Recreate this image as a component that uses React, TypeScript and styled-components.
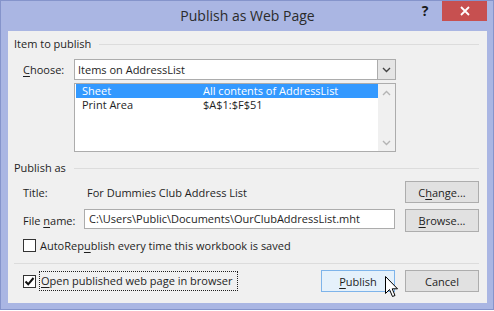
import styled, { createGlobalStyle } from 'styled-components';

const GlobalStyle = createGlobalStyle`
  html, body { margin: 0; padding: 0; background: #ffffff; }
  body { font-family: 'Segoe UI', 'Open Sans', 'Noto Sans', sans-serif; }
`;

const FONT = "'Segoe UI', 'Open Sans', 'Noto Sans', sans-serif";

const Window = styled.div`
  position: relative;
  box-sizing: border-box;
  width: 494px;
  height: 310px;
  background: #aab6e3;
  border: 1px solid #8594cb;
  padding: 0 6px 6px 7px;
  display: flex;
  flex-direction: column;
  font-family: ${FONT};
  font-size: 11px;
  color: #1e1e1e;
`;

const TitleBar = styled.div`
  height: 30px;
  display: grid;
  grid-template-columns: 1fr auto 1fr;
  align-items: start;
`;

const Title = styled.div`
  grid-column: 2;
  font-size: 14px;
  line-height: 30px;
  color: #2b2b2b;
`;

const Controls = styled.div`
  grid-column: 3;
  justify-self: end;
  display: flex;
  align-items: flex-start;
`;

const HelpButton = styled.div`
  width: 30px;
  height: 20px;
  font-size: 14px;
  font-weight: 700;
  line-height: 20px;
  text-align: center;
  color: #1a1a1a;
  margin-right: 2px;
`;

const CloseButton = styled.div`
  width: 45px;
  height: 20px;
  background: #c75050;
  display: flex;
  align-items: center;
  justify-content: center;
`;

const Client = styled.div`
  flex: 1;
  background: #f0f0f0;
  padding: 0 8px 0 6px;
  display: flex;
  flex-direction: column;
`;

const GroupHeader = styled.div<{ $top: number }>`
  margin-top: ${p => p.$top}px;
  height: 14px;
  display: flex;
  align-items: center;
  gap: 8px;
  line-height: 14px;
  &::after {
    content: '';
    flex: 1;
    height: 1px;
    background: #dcdcdc;
  }
`;

const Row = styled.div<{ $top: number; $h: number }>`
  margin-top: ${p => p.$top}px;
  height: ${p => p.$h}px;
  padding-left: 9px;
  display: flex;
  align-items: center;
`;

const Label = styled.div<{ $w: number }>`
  width: ${p => p.$w}px;
  flex-shrink: 0;
`;

const Combo = styled.div`
  box-sizing: border-box;
  width: 322px;
  height: 21px;
  border: 1px solid #acacac;
  background: #ffffff;
  display: flex;
  align-items: stretch;
`;

const ComboText = styled.div`
  flex: 1;
  padding-left: 3px;
  line-height: 20px;
`;

const ComboArrow = styled.div`
  width: 17px;
  background: #e5e5e5;
  border-left: 1px solid #acacac;
  display: flex;
  align-items: center;
  justify-content: center;
`;

const ListBox = styled.div`
  box-sizing: border-box;
  margin: 3px 0 0 60px;
  width: 322px;
  height: 69px;
  border: 1px solid #acacac;
  background: #ffffff;
  display: flex;
`;

const ListItems = styled.div`
  flex: 1;
  padding: 0 0 0 1px;
`;

const ListItem = styled.div<{ $selected?: boolean }>`
  height: 14px;
  line-height: 14px;
  display: flex;
  padding-left: 6px;
  background: ${p => (p.$selected ? '#3399ff' : 'transparent')};
  color: ${p => (p.$selected ? '#ffffff' : '#1e1e1e')};
`;

const ListCol = styled.div`
  width: 121px;
`;

const ScrollBar = styled.div`
  width: 17px;
  background: #f0f0f0;
  display: flex;
  flex-direction: column;
  justify-content: space-between;
  align-items: center;
  padding: 6px 0 5px;
  box-sizing: border-box;
`;

const Value = styled.div`
  flex: 1;
`;

const TextInput = styled.div`
  box-sizing: border-box;
  width: 311px;
  height: 20px;
  border: 1px solid #acacac;
  background: #ffffff;
  padding-left: 4px;
  line-height: 18px;
  align-self: flex-start;
`;

const Button = styled.div<{ $default?: boolean; $h?: number; $gap?: number }>`
  box-sizing: border-box;
  width: 74px;
  height: ${p => p.$h ?? 22}px;
  margin-left: ${p => (p.$gap !== undefined ? `${p.$gap}px` : 'auto')};
  border: 1px solid ${p => (p.$default ? '#7eb4ea' : '#adadad')};
  background: ${p => (p.$default ? '#e5f1fb' : '#e1e1e1')};
  display: flex;
  align-items: center;
  justify-content: center;
  flex-shrink: 0;
  align-self: flex-start;
`;

const Check = styled.div`
  box-sizing: border-box;
  width: 13px;
  height: 13px;
  border: 1px solid #333333;
  background: #ffffff;
  margin-right: 4px;
  flex-shrink: 0;
  display: flex;
  align-items: center;
  justify-content: center;
`;

const Focus = styled.div`
  outline: 1px dotted #1e1e1e;
  outline-offset: 0;
  padding: 1px 0 2px 1px;
  width: 196px;
  margin-right: auto;
`;

const Separator = styled.div`
  margin-top: 11px;
  height: 1px;
  background: #dcdcdc;
`;

const Key = styled.u`
  text-underline-offset: 2px;
`;

const Cursor = styled.svg`
  position: absolute;
  left: 384px;
  top: 275px;
`;

const Chevron = ({ color, up }: { color: string; up?: boolean }) => (
  <svg width="9" height="6" viewBox="0 0 9 6">
    <path
      d={up ? 'M1 5 L4.5 1.5 L8 5' : 'M1 1 L4.5 4.5 L8 1'}
      fill="none"
      stroke={color}
      strokeWidth="1.4"
    />
  </svg>
);

export default function App() {
  return (
    <>
      <GlobalStyle />
      <Window>
        <TitleBar>
          <Title>Publish as Web Page</Title>
          <Controls>
            <HelpButton>?</HelpButton>
            <CloseButton>
              <svg width="10" height="10" viewBox="0 0 10 10">
                <path d="M1 1 L9 9 M9 1 L1 9" stroke="#ffffff" strokeWidth="1.8" />
              </svg>
            </CloseButton>
          </Controls>
        </TitleBar>
        <Client>
          <GroupHeader $top={6}>Item to publish</GroupHeader>
          <Row $top={8} $h={21}>
            <Label $w={51}>
              <Key>C</Key>hoose:
            </Label>
            <Combo>
              <ComboText>Items on AddressList</ComboText>
              <ComboArrow>
                <Chevron color="#444" />
              </ComboArrow>
            </Combo>
          </Row>
          <ListBox>
            <ListItems>
              <ListItem $selected>
                <ListCol>Sheet</ListCol>
                <div>All contents of AddressList</div>
              </ListItem>
              <ListItem>
                <ListCol>Print Area</ListCol>
                <div>$A$1:$F$51</div>
              </ListItem>
            </ListItems>
            <ScrollBar>
              <Chevron color="#b4b4b4" up />
              <Chevron color="#b4b4b4" />
            </ScrollBar>
          </ListBox>
          <GroupHeader $top={9}>Publish as</GroupHeader>
          <Row $top={6} $h={22}>
            <Label $w={64}>Title:</Label>
            <Value>For Dummies Club Address List</Value>
            <Button>
              C<Key>h</Key>ange...
            </Button>
          </Row>
          <Row $top={6} $h={23}>
            <Label $w={61}>
              File <Key>n</Key>ame:
            </Label>
            <TextInput>C:\Users\Public\Documents\OurClubAddressList.mht</TextInput>
            <Button $h={23}>
              <Key>B</Key>rowse...
            </Button>
          </Row>
          <Row $top={6} $h={14}>
            <Check />
            AutoRep<Key>u</Key>blish every time this workbook is saved
          </Row>
          <Separator />
          <Row $top={6} $h={22}>
            <Check>
              <svg width="11" height="11" viewBox="0 0 11 11">
                <path d="M1.5 5.5 L4.2 8.3 L9.5 2" fill="none" stroke="#111" strokeWidth="2" />
              </svg>
            </Check>
            <Focus>
              <Key>O</Key>pen published web page in browser
            </Focus>
            <Button $default>
              <Key>P</Key>ublish
            </Button>
            <Button $gap={10}>Cancel</Button>
          </Row>
        </Client>
        <Cursor width="14" height="22" viewBox="0 0 14 22">
          <path
            d="M0.5 0.5 L0.5 17.5 L4.5 13.5 L7.5 20.5 L10 19.5 L7.2 12.8 L12.5 12.8 Z"
            fill="#ffffff"
            stroke="#000000"
            strokeWidth="1"
          />
        </Cursor>
      </Window>
    </>
  );
}
